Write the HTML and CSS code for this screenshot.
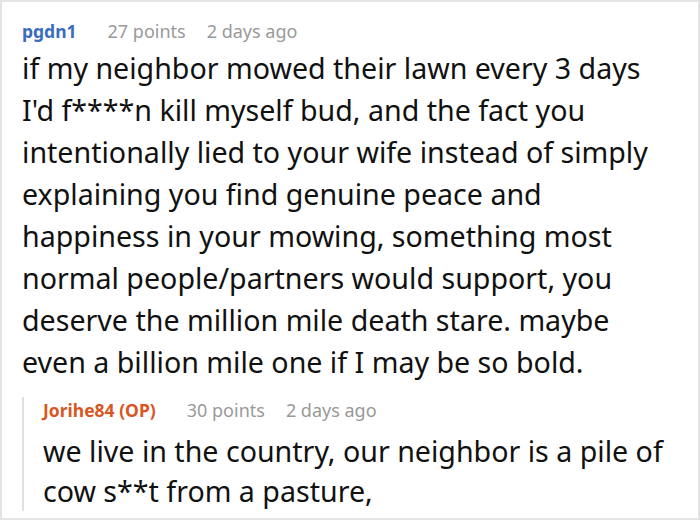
FILE: index.html
```html
<!DOCTYPE html>
<html>
<head>
<meta charset="utf-8">
<link rel="stylesheet" href="styles.css">
</head>
<body>
<div class="frame">
  <div class="comment">
    <div class="meta">
      <span class="user">pgdn1</span>
      <span class="points">27 points</span>
      <span class="time">2 days ago</span>
    </div>
    <p class="text">if my neighbor mowed their lawn every 3 days I'd f****n kill myself bud, and the fact you intentionally lied to your wife instead of simply explaining you find genuine peace and happiness in your mowing, something most normal people/partners would support, you deserve the million mile death stare. maybe even a billion mile one if I may be so bold.</p>
    <div class="reply">
      <div class="meta">
        <span class="user op">Jorihe84 (OP)</span>
        <span class="points">30 points</span>
        <span class="time">2 days ago</span>
      </div>
      <p class="text reply-text">we live in the country, our neighbor is a pile of cow s**t from a pasture,</p>
    </div>
  </div>
</div>
</body>
</html>
```
FILE: styles.css
```css
html, body {
  margin: 0;
  padding: 0;
  background: #fff;
}
.frame {
  width: 700px;
  height: 520px;
  box-sizing: border-box;
  border: 2px solid #e4e4e4;
  overflow: hidden;
  font-family: "Noto Sans", sans-serif;
}
.comment {
  padding: 16px 31px 0 20px;
}
.meta {
  font-size: 18px;
  line-height: 26px;
  display: flex;
  align-items: baseline;
}
.user {
  font-weight: bold;
  font-size: 17.5px;
  color: #3a6cbf;
  margin-right: 31px;
}
.user.op {
  color: #d9561f;
}
.points {
  color: #999;
  margin-right: 21px;
}
.time {
  color: #999;
}
.text {
  margin: 3px 0 0 0;
  font-size: 28.6px;
  line-height: 42px;
  color: #111;
}
.reply {
  margin-top: 14px;
  border-left: 2px solid #e0e0e0;
  padding-left: 19px;
}
.reply-text {
  margin-top: 8px;
  line-height: 40px;
}
```
